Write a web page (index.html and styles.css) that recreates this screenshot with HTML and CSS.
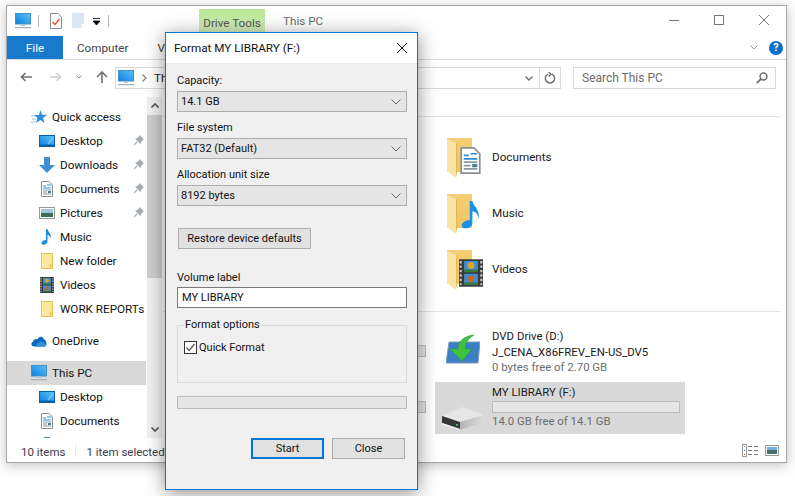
FILE: index.html
```html
<!DOCTYPE html>
<html lang="en">

<head>
    <meta charset="UTF-8">
    <title>This PC</title>
    <link rel="stylesheet" href="styles.css">
</head>

<body>
    <!-- icon set -->
    <svg class="defs" width="0" height="0">
        <defs>
            <linearGradient id="screen" x1="0" y1="1" x2="1" y2="0">
                <stop offset="0" stop-color="#0a7fe0" />
                <stop offset="1" stop-color="#5cc4f7" />
            </linearGradient>
            <linearGradient id="folderBack" x1="0" y1="0" x2="0" y2="1">
                <stop offset="0" stop-color="#f3cf74" />
                <stop offset="1" stop-color="#efc662" />
            </linearGradient>
            <linearGradient id="hddSide" x1="0" y1="0" x2="1" y2="0">
                <stop offset="0" stop-color="#b4b4b4" />
                <stop offset="1" stop-color="#dcdcdc" />
            </linearGradient>
            <symbol id="pc" viewBox="0 0 16 16">
                <rect x="0.5" y="0.5" width="15" height="10.5" fill="url(#screen)" stroke="#3d8fc4" />
                <rect x="6" y="11" width="4" height="2" fill="#a9c3d6" />
                <rect x="0" y="14" width="16" height="1.2" fill="#9fb0bc" />
            </symbol>
            <symbol id="desktop" viewBox="0 0 16 12">
                <rect x="0.5" y="0.5" width="15" height="11" fill="url(#screen)" stroke="#0a5fa8" />
                <rect x="1" y="9.6" width="14" height="1.4" fill="#0b5ea6" />
                <path d="M9 9 L14 2" stroke="#7fd2fa" stroke-width="1.2" />
            </symbol>
            <symbol id="down" viewBox="0 0 16 16">
                <path d="M5 0 H11 V8 H16 L8 16 L0 8 H5 Z" fill="#3f8fd6" />
            </symbol>
            <symbol id="doc" viewBox="0 0 12 16">
                <path d="M0.5 0.5 H8 L11.5 4 V15.5 H0.5 Z" fill="#fff" stroke="#8a8f94" />
                <path d="M2 5 H5 M6 4 H10 M2 7 H10" stroke="#2b8fd8" />
                <path d="M2 9 H10 M2 11 H6 M2 13 H10" stroke="#8a9aa5" />
                <rect x="7" y="10" width="3" height="2" fill="#4d7f92" />
            </symbol>
            <symbol id="picture" viewBox="0 0 16 12">
                <rect x="0.5" y="0.5" width="15" height="11" fill="#fff" stroke="#9a9a9a" />
                <rect x="2" y="2" width="12" height="4" fill="#9fc7dd" />
                <rect x="2" y="6" width="12" height="4" fill="#3f6b5a" />
            </symbol>
            <symbol id="note" viewBox="0 0 12 16">
                <path d="M5 0 H6.5 C7 3 11 5 10 10 C9.6 7 8 6 6.5 6 V12.5 C6.5 15 3.5 16 1.5 15.5 C-0.5 14.5 0.5 11 5 11 Z" fill="#1a8fe6" />
            </symbol>
            <symbol id="folder" viewBox="0 0 12 16">
                <rect x="0.5" y="0.5" width="11" height="15" fill="#fde89f" stroke="#e8c250" />
                <rect x="9" y="11" width="2.5" height="4.5" fill="#f6d66c" stroke="#e8c250" stroke-width="0.6" />
            </symbol>
            <symbol id="film" viewBox="0 0 14 16">
                <rect width="14" height="16" fill="#3a3a3a" />
                <path d="M1 1 V15 M13 1 V15" stroke="#c9c9c9" stroke-dasharray="1.4 1.2" stroke-width="1.2" />
                <rect x="3" y="1" width="8" height="6.5" fill="#3f8ed6" />
                <rect x="3" y="8.5" width="8" height="6.5" fill="#3f8ed6" />
                <circle cx="7" cy="3.6" r="2" fill="#d9a52a" />
                <circle cx="7" cy="11.4" r="2" fill="#c9652a" />
                <rect x="3" y="6" width="8" height="1.5" fill="#3b7a3a" />
                <rect x="3" y="13.5" width="8" height="1.5" fill="#3b7a3a" />
            </symbol>
            <symbol id="star" viewBox="0 0 16 14">
                <path d="M9.5 0 L11 4.8 H16 L12 8 L13.5 13 L9.5 10 L5 13 L6.5 8 L3 5 H8 Z" fill="#2b8fe0" />
                <path d="M0 6 H4 M1 9 H5 M0 12 H4" stroke="#8fc5ee" />
            </symbol>
            <symbol id="pin" viewBox="0 0 12 12">
                <path d="M7 0 L12 5 L10.5 5.6 L8.6 7.8 L8.2 10 L2.2 4 L4.4 3.6 L6.4 1.5 Z M3.5 7 L0 12 L5 8.5 Z" fill="#a3a8ad" />
            </symbol>
            <symbol id="cloud" viewBox="0 0 16 11">
                <path d="M3 11 C0 11 -0.5 7 2 6.2 C2.5 3.5 5 3 6.5 4 C7.5 0.5 12 0 13 4 C16 4.5 16.5 11 13 11 Z" fill="#0d68bf" />
                <path d="M6 11 C4.5 9 6 7 8 7.2 C9.5 5 13.5 6 13.5 8 C16 8 16 11 13.5 11 Z" fill="#2b8fdc" />
            </symbol>
            <symbol id="bigfolder" viewBox="0 0 26 40">
                <rect x="0" y="0" width="25" height="34" fill="url(#folderBack)" />
                <path d="M0 1 L9 5 V40 L0 33 Z" fill="#fbe3a3" />
                <path d="M9 5 V40 L10 34 V5 Z" fill="#e0b750" />
            </symbol>
        </defs>
    </svg>

    <div class="window">
        <div class="titlebar">
            <svg class="qa-pc"><use href="#pc" /></svg>
            <span class="qa-sep"></span>
            <svg class="qa-check" viewBox="0 0 12 16">
                <path d="M0.5 0.5 H8 L11.5 4 V15.5 H0.5 Z" fill="#fff" stroke="#8a8f94" />
                <path d="M2.5 9 L5 11.5 L9.5 6" fill="none" stroke="#e2521d" stroke-width="1.3" />
            </svg>
            <svg class="qa-blank" viewBox="0 0 12 15">
                <rect width="12" height="15" fill="#dbe5f3" />
                <rect x="9.5" y="11" width="2.5" height="4" fill="#fff" />
            </svg>
            <svg class="qa-drop" viewBox="0 0 8 8">
                <path d="M0 0.5 H7 M0 3 H7 L3.5 7 Z" fill="#000" stroke="#000" stroke-width="0.8" />
            </svg>
            <span class="qa-sep last"></span>
            <div class="tool-tab">Drive Tools</div>
            <div class="title-text">This PC</div>
            <div class="controls">
                <svg viewBox="0 0 10 10"><path d="M0 5.5 H10" stroke="#777" /></svg>
                <svg viewBox="0 0 10 10"><rect x="0.5" y="0.5" width="9" height="9" fill="none" stroke="#777" /></svg>
                <svg viewBox="0 0 10 10"><path d="M0 0 L10 10 M10 0 L0 10" stroke="#777" /></svg>
            </div>
        </div>

        <div class="tabs">
            <div class="tab-file">File</div>
            <div class="tab">Computer</div>
            <div class="tab tab-view">View</div>
            <svg class="ribbon-chev" viewBox="0 0 8 5"><path d="M0.5 0.5 L4 4 L7.5 0.5" fill="none" stroke="#999" /></svg>
            <div class="help">?</div>
        </div>

        <div class="nav">
            <svg class="nav-btn" viewBox="0 0 12 10"><path d="M12 5 H1.5 M5.5 1 L1.5 5 L5.5 9" fill="none" stroke="#707070" stroke-width="1.6" /></svg>
            <svg class="nav-btn fwd" viewBox="0 0 12 10"><path d="M0 5 H10.5 M6.5 1 L10.5 5 L6.5 9" fill="none" stroke="#d0d0d0" stroke-width="1.6" /></svg>
            <svg class="nav-chev" viewBox="0 0 6 4"><path d="M0.5 0.5 L3 3 L5.5 0.5" fill="none" stroke="#888" /></svg>
            <svg class="nav-up" viewBox="0 0 12 12"><path d="M6 12 V1.5 M1 6 L6 1 L11 6" fill="none" stroke="#707070" stroke-width="1.6" /></svg>
            <div class="address">
                <svg class="addr-pc"><use href="#pc" /></svg>
                <svg class="addr-sep" viewBox="0 0 5 8"><path d="M0.5 0.5 L4 4 L0.5 7.5" fill="none" stroke="#808080" stroke-width="1.2" /></svg>
                <span class="addr-text">This PC</span>
                <svg class="addr-chev" viewBox="0 0 8 5"><path d="M0.5 0.5 L4 4 L7.5 0.5" fill="none" stroke="#707070" stroke-width="1.4" /></svg>
                <div class="addr-refresh">
                    <svg viewBox="0 0 12 12"><path d="M4 2.2 A4.6 4.6 0 1 0 8 2.2 M4.6 0 L7 2.2 L4.6 4.4" fill="none" stroke="#707070" stroke-width="1.4" /></svg>
                </div>
            </div>
            <div class="search">
                <span>Search This PC</span>
                <svg viewBox="0 0 12 12"><circle cx="7.5" cy="4.5" r="3.4" fill="none" stroke="#707070" stroke-width="1.5" /><path d="M5 7 L0.8 11.2" stroke="#707070" stroke-width="1.8" /></svg>
            </div>
        </div>

        <div class="body">
            <div class="sidebar">
                <div class="tree-row level1"><svg class="ic-w16"><use href="#star" /></svg>Quick access</div>
                <div class="tree-row"><svg class="ic-w16"><use href="#desktop" /></svg>Desktop<svg class="pin"><use href="#pin" /></svg></div>
                <div class="tree-row"><svg class="ic-w16"><use href="#down" /></svg>Downloads<svg class="pin"><use href="#pin" /></svg></div>
                <div class="tree-row"><svg class="ic-w16"><use href="#doc" /></svg>Documents<svg class="pin"><use href="#pin" /></svg></div>
                <div class="tree-row"><svg class="ic-w16"><use href="#picture" /></svg>Pictures<svg class="pin"><use href="#pin" /></svg></div>
                <div class="tree-row"><svg class="ic-w16"><use href="#note" /></svg>Music</div>
                <div class="tree-row"><svg class="ic-w16"><use href="#folder" /></svg>New folder</div>
                <div class="tree-row"><svg class="ic-w16"><use href="#film" /></svg>Videos</div>
                <div class="tree-row"><svg class="ic-w16"><use href="#folder" /></svg>WORK REPORTs</div>
                <div class="tree-row level1 spaced"><svg class="ic-w16"><use href="#cloud" /></svg>OneDrive</div>
                <div class="tree-row level1 spaced selected"><svg class="ic-w16"><use href="#pc" /></svg>This PC</div>
                <div class="tree-row"><svg class="ic-w16"><use href="#desktop" /></svg>Desktop</div>
                <div class="tree-row"><svg class="ic-w16"><use href="#doc" /></svg>Documents</div>
                <div class="tree-row cut"><svg class="ic-w16"><use href="#down" /></svg></div>
            </div>
            <div class="scrollbar">
                <svg class="scroll-arrow" viewBox="0 0 8 5"><path d="M0.5 4.5 L4 1 L7.5 4.5" fill="none" stroke="#555" stroke-width="1.6" /></svg>
                <div class="thumb"></div>
                <svg class="scroll-arrow" viewBox="0 0 8 5"><path d="M0.5 0.5 L4 4 L7.5 0.5" fill="none" stroke="#555" stroke-width="1.6" /></svg>
            </div>

            <div class="content">
                <div class="group-line first"></div>
                <div class="folders">
                    <div class="folder-item">
                        <div class="big-icon">
                            <svg class="big-folder"><use href="#bigfolder" /></svg>
                            <svg class="big-over doc-over"><use href="#doc" /></svg>
                        </div>
                        Documents
                    </div>
                    <div class="folder-item">
                        <div class="big-icon">
                            <svg class="big-folder"><use href="#bigfolder" /></svg>
                            <svg class="big-over note-over"><use href="#note" /></svg>
                        </div>
                        Music
                    </div>
                    <div class="folder-item">
                        <div class="big-icon">
                            <svg class="big-folder"><use href="#bigfolder" /></svg>
                            <svg class="big-over film-over"><use href="#film" /></svg>
                        </div>
                        Videos
                    </div>
                </div>
                <div class="group-line"></div>
                <div class="drives">
                    <div class="drive-stub"><div class="usage"></div></div>
                    <div class="drive">
                        <svg class="drive-icon dvd" viewBox="0 0 34 31">
                            <path d="M3 9 H34 L32 30 H0 Z" fill="#3a7fc4" stroke="#7f9db8" />
                            <path d="M12 16 L4 16 L16 28 L26 16 L19 16 C19 10 22 6 28 2 C18 3 12 8 12 16 Z" fill="#3fc23f" stroke="#2b9a3a" stroke-width="0.6" />
                        </svg>
                        <div class="drive-text">
                            <div>DVD Drive (D:)</div>
                            <div>J_CENA_X86FREV_EN-US_DV5</div>
                            <div class="free">0 bytes free of 2.70 GB</div>
                        </div>
                    </div>
                    <div class="drive-stub"><div class="usage"></div></div>
                    <div class="drive selected">
                        <svg class="drive-icon hdd" viewBox="0 0 42 23">
                            <path d="M0 9 L20 0 L42 8 L18 15 Z" fill="#e6e6e6" />
                            <path d="M18 15 L42 8 V15 L18 23 Z" fill="url(#hddSide)" />
                            <path d="M0 9 L18 15 V22 L0 16 Z" fill="#35383b" />
                            <path d="M0 16 L18 22 V23 L0 18 Z" fill="#efefef" />
                            <rect x="14" y="17" width="2" height="1.6" fill="#3fd05a" />
                        </svg>
                        <div class="drive-text">
                            <div>MY LIBRARY (F:)</div>
                            <div class="usage wide"></div>
                            <div class="free">14.0 GB free of 14.1 GB</div>
                        </div>
                    </div>
                </div>
            </div>
        </div>

        <div class="status">
            <span class="status-text">10 items</span>
            <span class="status-sep"></span>
            <span class="status-text">1 item selected</span>
            <div class="views">
                <svg class="view-list" viewBox="0 0 16 13">
                    <rect x="0.5" y="0.5" width="4" height="12" fill="#fff" stroke="#9a9a9a" />
                    <rect x="2" y="2" width="1" height="1" fill="#5a9a3a" />
                    <rect x="2" y="6" width="1" height="1" fill="#2b7fd8" />
                    <rect x="2" y="10" width="1" height="1" fill="#d83a2b" />
                    <path d="M6 2.5 H10 M12 2.5 H16 M6 6.5 H10 M12 6.5 H16 M6 10.5 H10 M12 10.5 H16" stroke="#7a7a7a" />
                </svg>
                <svg class="view-thumb" viewBox="0 0 14 11">
                    <rect x="0.5" y="0.5" width="13" height="10" fill="#fff" stroke="#9a9a9a" />
                    <rect x="2" y="2" width="10" height="3" fill="#6fb0e0" />
                    <rect x="2" y="5" width="10" height="4" fill="#4a6f6a" />
                </svg>
            </div>
        </div>
    </div>

    <div class="dialog">
        <div class="dialog-title">
            <span>Format MY LIBRARY (F:)</span>
            <svg viewBox="0 0 10 10"><path d="M0 0 L10 10 M10 0 L0 10" stroke="#111" /></svg>
        </div>
        <div class="dialog-body">
            <label class="field-label">Capacity:</label>
            <div class="combo">14.1 GB<svg viewBox="0 0 10 6"><path d="M0.5 0.5 L5 5 L9.5 0.5" fill="none" stroke="#666" /></svg></div>
            <label class="field-label">File system</label>
            <div class="combo">FAT32 (Default)<svg viewBox="0 0 10 6"><path d="M0.5 0.5 L5 5 L9.5 0.5" fill="none" stroke="#666" /></svg></div>
            <label class="field-label">Allocation unit size</label>
            <div class="combo">8192 bytes<svg viewBox="0 0 10 6"><path d="M0.5 0.5 L5 5 L9.5 0.5" fill="none" stroke="#666" /></svg></div>
            <button class="btn btn-restore">Restore device defaults</button>
            <label class="field-label volume">Volume label</label>
            <div class="text-input">MY LIBRARY</div>
            <fieldset class="options">
                <legend>Format options</legend>
                <div class="check-row">
                    <svg class="checkbox" viewBox="0 0 13 13">
                        <rect x="0.5" y="0.5" width="12" height="12" fill="#fff" stroke="#333" />
                        <path d="M2.5 6.5 L5.2 9.5 L10.5 3" fill="none" stroke="#555" stroke-width="1.2" />
                    </svg>
                    Quick Format
                </div>
            </fieldset>
            <div class="progress"></div>
            <div class="dialog-actions">
                <button class="btn btn-start">Start</button>
                <button class="btn">Close</button>
            </div>
        </div>
    </div>
</body>

</html>
```

FILE: styles.css
```css
html,
body {
    margin: 0;
    padding: 0;
    height: 100%;
    background: #fff;
    overflow: hidden;
}

body {
    font-family: Roboto, sans-serif;
    font-size: 11.7px;
    color: #1a1a1a;
    position: relative;
}

svg {
    display: block;
    flex: none;
}

.defs {
    position: absolute;
}

/* explorer window */
.window {
    margin: 5px 0 0 6px;
    width: 779px;
    height: 456px;
    border: 1px solid #a6a6a6;
    box-shadow: 0 2px 12px rgba(0, 0, 0, 0.25);
    background: #fff;
    display: flex;
    flex-direction: column;
}

.titlebar {
    height: 30px;
    display: flex;
    align-items: flex-start;
    padding-left: 8px;
    flex: none;
}

.qa-pc {
    width: 16px;
    height: 16px;
    margin-top: 7px;
}

.qa-sep {
    width: 1px;
    height: 12px;
    background: #b5b5b5;
    margin: 9px 0 0 7px;
}

.qa-check {
    width: 12px;
    height: 16px;
    margin: 7px 0 0 11px;
}

.qa-blank {
    width: 12px;
    height: 15px;
    margin: 7px 0 0 10px;
}

.qa-drop {
    width: 8px;
    height: 8px;
    margin: 12px 0 0 9px;
}

.qa-sep.last {
    margin-left: 7px;
}

.tool-tab {
    margin: 3px 0 0 90px;
    width: 66px;
    height: 27px;
    background: linear-gradient(#b7e793, #dcf1c8);
    color: #555;
    text-align: center;
    line-height: 28px;
    white-space: nowrap;
}

.title-text {
    margin: 8px 0 0 18px;
    color: #6a6a6a;
}

.controls {
    margin-left: auto;
    display: flex;
    gap: 35px;
    padding: 9px 17px 0 0;
}

.controls svg {
    width: 10px;
    height: 10px;
}

.tabs {
    height: 23px;
    border-bottom: 1px solid #dadbdc;
    display: flex;
    align-items: center;
    flex: none;
}

.tab-file {
    width: 56px;
    height: 23px;
    line-height: 24px;
    background: #1979ca;
    color: #fff;
    text-align: center;
}

.tab {
    margin-left: 14px;
    color: #444;
}

.tab-view {
    margin-left: 29px;
}

.ribbon-chev {
    width: 8px;
    height: 5px;
    margin-left: auto;
}

.help {
    width: 14px;
    height: 14px;
    margin: 0 3px 0 11px;
    border-radius: 50%;
    background: #0a6fc9;
    color: #fff;
    font-size: 11px;
    font-weight: bold;
    line-height: 14px;
    text-align: center;
}

.nav {
    height: 37px;
    display: flex;
    align-items: flex-start;
    flex: none;
}

.nav-btn {
    width: 12px;
    height: 10px;
    margin: 12px 0 0 13px;
}

.nav-btn.fwd {
    margin-left: 18px;
}

.nav-chev {
    width: 6px;
    height: 4px;
    margin: 15px 0 0 14px;
}

.nav-up {
    width: 12px;
    height: 12px;
    margin: 11px 0 0 14px;
}

.address {
    margin: 7px 0 0 7px;
    width: 444px;
    height: 20px;
    border: 1px solid #d9d9d9;
    display: flex;
    align-items: center;
}

.addr-pc {
    width: 16px;
    height: 16px;
    margin-left: 2px;
}

.addr-sep {
    width: 5px;
    height: 8px;
    margin-left: 8px;
}

.addr-text {
    margin-left: 7px;
}

.addr-chev {
    width: 8px;
    height: 5px;
    margin-left: auto;
}

.addr-refresh {
    width: 20px;
    height: 20px;
    margin-left: 6px;
    border-left: 1px solid #d9d9d9;
    display: flex;
    align-items: center;
    justify-content: center;
}

.addr-refresh svg {
    width: 12px;
    height: 12px;
}

.search {
    margin: 7px 0 0 12px;
    width: 186px;
    height: 20px;
    border: 1px solid #d9d9d9;
    display: flex;
    align-items: center;
    justify-content: space-between;
    padding: 0 7px 0 8px;
    color: #6d6d6d;
    font-size: 12px;
    flex: none;
}

.search svg {
    width: 12px;
    height: 12px;
}

.body {
    flex: 1;
    min-height: 0;
    display: flex;
}

.sidebar {
    width: 140px;
    padding-top: 8px;
    box-sizing: border-box;
    overflow: hidden;
    flex: none;
}

.tree-row {
    height: 24px;
    display: flex;
    align-items: center;
    padding-left: 32px;
    position: relative;
    white-space: nowrap;
    color: #111;
}

.tree-row.level1 {
    padding-left: 24px;
}

.tree-row.spaced {
    margin-top: 8px;
}

.tree-row.selected {
    background: #d9d9d9;
    margin-right: 1px;
}

.ic-w16 {
    width: 16px;
    height: 16px;
    margin-right: 5px;
}

.pin {
    position: absolute;
    right: 3px;
    top: 6px;
    width: 11px;
    height: 11px;
}

.scrollbar {
    width: 15px;
    background: #f0f0f0;
    display: flex;
    flex-direction: column;
    align-items: center;
    flex: none;
}

.scroll-arrow {
    width: 8px;
    height: 5px;
    margin: 6px 0 6px;
}

.thumb {
    width: 15px;
    height: 163px;
    background: #cdcdcd;
    margin-top: 1px;
    margin-bottom: auto;
}

.content {
    flex: 1;
    margin-left: 1px;
    padding-right: 6px;
    overflow: hidden;
}

.group-line {
    height: 14px;
    border-bottom: 1px solid #e3e3e3;
}

.group-line.first {
    height: 19px;
}

.folders {
    padding: 12px 0 0 272px;
}

.folder-item {
    height: 56px;
    display: flex;
    align-items: center;
    padding-left: 12px;
}

.big-icon {
    width: 45px;
    height: 42px;
    position: relative;
    flex: none;
}

.big-folder {
    width: 26px;
    height: 40px;
    margin-top: 2px;
}

.big-over {
    position: absolute;
}

.doc-over {
    left: 13px;
    top: 11px;
    width: 21px;
    height: 27px;
}

.note-over {
    left: 14px;
    top: 7px;
    width: 21px;
    height: 32px;
}

.film-over {
    left: 12px;
    top: 11px;
    width: 24px;
    height: 28px;
}

.drives {
    padding-top: 14px;
    display: grid;
    grid-template-columns: 272px 250px;
    row-gap: 4px;
}

.drive-stub {
    padding: 19px 0 0 72px;
}

.usage {
    width: 189px;
    height: 10px;
    background: #e6e6e6;
    border: 1px solid #bcbcbc;
}

.usage.wide {
    width: 186px;
    margin: 0 0 1px;
}

.drive {
    height: 52px;
    display: flex;
    padding: 2px 0 0 7px;
    box-sizing: border-box;
}

.drive.selected {
    background: #d9d9d9;
}

.drive-icon {
    width: 42px;
    margin-right: 8px;
}

.drive-icon.dvd {
    width: 34px;
    height: 31px;
    margin: 5px 12px 0 4px;
}

.drive-icon.hdd {
    height: 23px;
    margin-top: 23px;
}

.drive-text {
    font-size: 11.4px;
    line-height: 15.5px;
    margin-top: 1px;
    white-space: nowrap;
}

.drive-text .free {
    color: #6d6d6d;
}

.status {
    height: 24px;
    display: flex;
    align-items: center;
    padding-left: 14px;
    color: #3b3b4f;
    font-size: 11.5px;
    flex: none;
}

.status-text {
    margin-top: 3px;
}

.status-sep {
    width: 1px;
    height: 14px;
    background: #ececec;
    margin: 0 10px;
}

.views {
    margin-left: auto;
    display: flex;
    align-items: center;
    gap: 7px;
    padding-right: 7px;
}

.view-list {
    width: 16px;
    height: 13px;
}

.view-thumb {
    width: 14px;
    height: 11px;
}

/* format dialog, sits over the explorer window */
.dialog {
    position: absolute;
    left: 165px;
    top: 32px;
    width: 251px;
    height: 456px;
    border: 1px solid #0078d7;
    box-shadow: 0 3px 18px rgba(0, 0, 0, 0.45);
    background: #f0f0f0;
    display: flex;
    flex-direction: column;
    color: #111;
}

.dialog-title {
    height: 30px;
    background: #fff;
    display: flex;
    align-items: center;
    justify-content: space-between;
    padding: 0 10px 0 8px;
    flex: none;
}

.dialog-title svg {
    width: 10px;
    height: 10px;
}

.dialog-body {
    flex: 1;
    padding: 0 10px 0 11px;
    display: flex;
    flex-direction: column;
    align-items: flex-start;
    font-size: 11px;
}

.field-label {
    height: 16px;
    line-height: 17px;
    margin: 7px 0 3px;
}

.dialog-body .field-label:first-child {
    margin-top: 9px;
}

.combo {
    width: 220px;
    height: 19px;
    border: 1px solid #adadad;
    background: #e5e5e5;
    display: flex;
    align-items: center;
    justify-content: space-between;
    padding: 0 5px 0 3px;
    flex: none;
    line-height: 20px;
}

.combo svg {
    width: 10px;
    height: 6px;
}

.btn {
    width: 73px;
    height: 21px;
    box-sizing: border-box;
    border: 1px solid #adadad;
    background: #e1e1e1;
    font: inherit;
    color: inherit;
    padding: 0;
}

.btn-restore {
    width: 133px;
    margin: 22px 0 0 1px;
    flex: none;
}

.field-label.volume {
    margin: 20px 0 2px;
}

.text-input {
    width: 224px;
    height: 19px;
    line-height: 19px;
    border: 1px solid #7a7a7a;
    background: #fff;
    padding-left: 4px;
    flex: none;
}

.options {
    margin: 10px 0 0;
    padding: 7px 0 27px 6px;
    width: 222px;
    box-sizing: content-box;
    border: 1px solid #dcdcdc;
    flex: none;
    min-width: 0;
}

.options legend {
    padding: 0 1px;
    line-height: 14px;
}

.check-row {
    display: flex;
    align-items: center;
    gap: 2px;
    height: 16px;
}

.checkbox {
    width: 13px;
    height: 13px;
}

.progress {
    width: 228px;
    height: 11px;
    margin-top: 13px;
    background: #e6e6e6;
    border: 1px solid #bcbcbc;
    flex: none;
}

.dialog-actions {
    margin: 29px 0 0 74px;
    display: flex;
    gap: 8px;
}

.btn-start {
    border: 2px solid #0078d7;
}
```
